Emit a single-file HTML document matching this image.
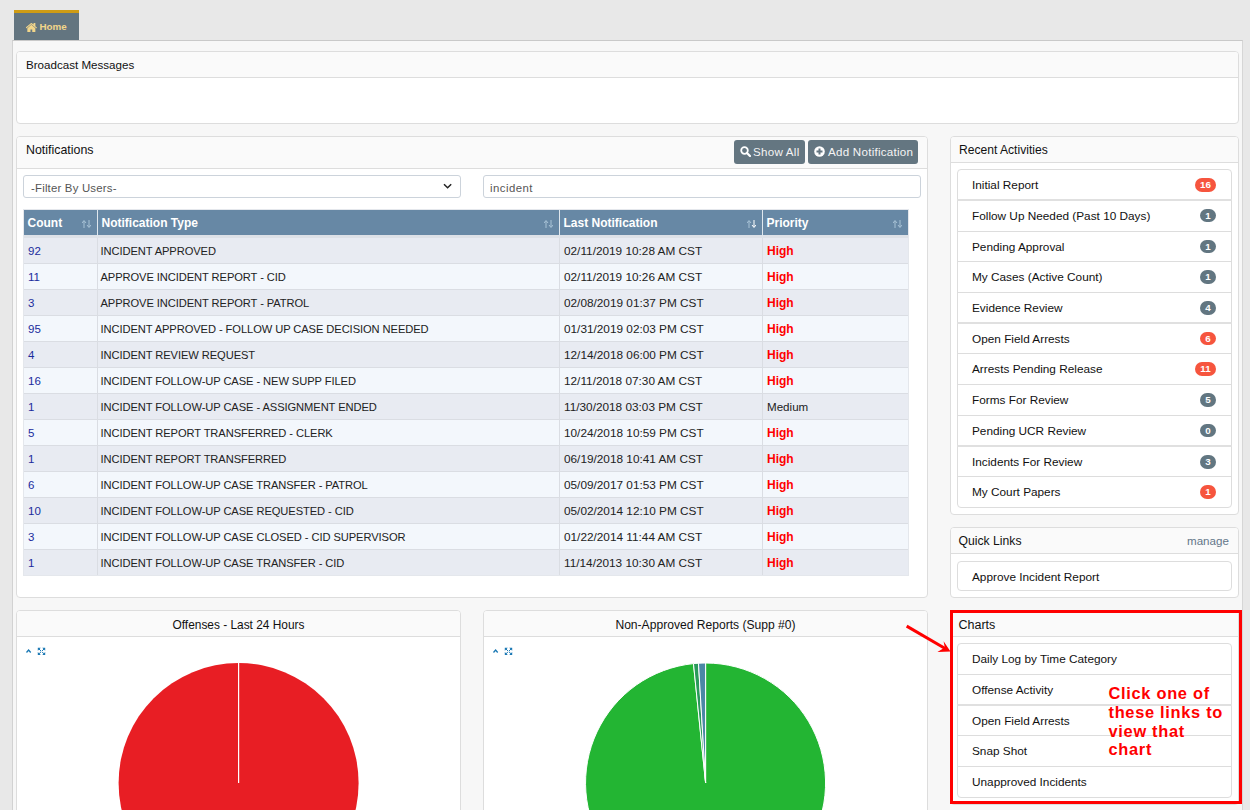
<!DOCTYPE html>
<html><head><meta charset="utf-8">
<style>
*{box-sizing:border-box;margin:0;padding:0}
html,body{width:1250px;height:810px;overflow:hidden;background:#e8e8e8;font-family:"Liberation Sans",sans-serif;color:#222;position:relative}
.abs{position:absolute}
.tab{left:14px;top:10px;width:65px;height:30px;background:#637580;border-top:3px solid #cf9c14}
.tab span{position:absolute;left:25.5px;top:8px;font-weight:bold;font-size:9.8px;color:#f2d68a}
.container{left:12px;top:40px;width:1231px;height:780px;background:#f7f7f7;border-top:1px solid #c9c9c9;border-left:1px solid #d2d2d2;border-right:1px solid #d6d6d6}
.panel{position:absolute;background:#fff;border:1px solid #dddddd;border-radius:4px;overflow:hidden}
.ph{position:absolute;left:0;right:0;top:0;background:#fafafa;border-bottom:1px solid #dddddd}
.pt{position:absolute;left:9px;font-size:11.6px;color:#111;white-space:nowrap}

.tbl{position:absolute;left:23px;top:209px;width:886px;border-collapse:separate;border-spacing:0;table-layout:fixed;border:1px solid #e4e7ec}
.tbl th{height:28px;background:#6788a5;color:#fff;font-weight:bold;font-size:12px;text-align:left;padding:0 0 0 3.5px;border-right:1px solid #dfe7ee;border-bottom:3px solid #dde1e7;position:relative;white-space:nowrap}
.tbl th:last-child,.tbl td:last-child{border-right:0}
.tbl td{height:26px;padding:0 0 0 4px;border-right:1px solid #dadde3;border-bottom:1px solid #dadde3;white-space:nowrap;font-size:11px;color:#222}
.tbl tr.odd td{background:#e8ebf2}
.tbl tr:last-child td{border-bottom:0;height:25px}
.tbl tr.even td{background:#f3f7fc}
.tbl td.c0{color:#1a2b9c;font-size:11.5px}
.tbl td.c2{font-size:11.8px}
.tbl td.c1{font-size:11.15px;padding-left:2.5px;letter-spacing:-0.08px}
.tbl td.hi{color:#f00;font-weight:bold;font-size:12px}
.tbl td.med{font-size:11.6px}
.sort{position:absolute;right:6px;top:10px;width:9px;height:8px}
.btn{position:absolute;top:140px;height:24px;background:#647681;border-radius:3px;color:#f4f4f4;font-size:11.6px}
.btn span{position:absolute;top:5px;white-space:nowrap;letter-spacing:0.25px}
.inp{position:absolute;top:175px;height:23px;background:#fff;border:1px solid #ccd3db;border-radius:3px;font-size:11.4px;color:#555}
.inp span{position:absolute;left:7px;top:5.5px;white-space:nowrap;letter-spacing:0.2px}

.lg{position:absolute;left:957px;width:275px;background:#fff;border:1px solid #dddddd;border-radius:4px}
.li{position:absolute;left:-1px;right:-1px;border-top:1px solid #dddddd;font-size:11.8px;color:#111}
.li:first-child{border-top-color:transparent}
.li span{position:absolute;left:15px;top:8px;white-space:nowrap}
.badge{position:absolute;right:16px;height:13.5px;border-radius:7px;color:#fff;font-weight:bold;font-size:9.8px;text-align:center;line-height:13.5px}
.br{background:#f6553e}
.bg{background:#627681}
</style></head><body>
<div class="abs tab"><svg style="position:absolute;left:12px;top:9.8px" width="11.6" height="9.2" viewBox="64 256 1664 1290" preserveAspectRatio="none"><path fill="#f2d68a" d="M1408 992v480q0 26-19 45t-45 19h-384v-384h-256v384h-384q-26 0-45-19t-19-45v-480q0-1 .5-3t.5-3l575-474 575 474q1 2 1 6zm223-69l-62 74q-8 9-21 11h-3q-13 0-21-7l-692-577-692 577q-12 8-24 7-13-2-21-11l-62-74q-8-10-7-23.5t11-21.5l719-599q32-26 76-26t76 26l244 204v-195q0-14 9-23t23-9h192q14 0 23 9t9 23v408l219 182q10 8 11 21.5t-7 23.5z"/></svg><span>Home</span></div>
<div class="abs container"></div>

<!-- Broadcast -->
<div class="panel" style="left:16px;top:51px;width:1223px;height:73px">
  <div class="ph" style="height:26px"><div class="pt" style="top:5.5px;left:9px">Broadcast Messages</div></div>
</div>

<!-- Notifications -->
<div class="panel" style="left:16px;top:136px;width:912px;height:462px">
  <div class="ph" style="height:32px"><div class="pt" style="top:6px;left:9px;font-size:12.4px">Notifications</div></div>
</div>


<table class="tbl">
<colgroup><col style="width:74px"><col style="width:462px"><col style="width:203px"><col style="width:145px"></colgroup>
<thead><tr><th>Count<svg class="sort" viewBox="0 0 9 8"><path d="M2 8V1M0 3L2 0.5L4 3" stroke="#a9c3d6" stroke-width="1" fill="none"/><path d="M7 0V7M5 5L7 7.5L9 5" stroke="#a9c3d6" stroke-width="1" fill="none"/></svg></th><th>Notification Type<svg class="sort" viewBox="0 0 9 8"><path d="M2 8V1M0 3L2 0.5L4 3" stroke="#a9c3d6" stroke-width="1" fill="none"/><path d="M7 0V7M5 5L7 7.5L9 5" stroke="#a9c3d6" stroke-width="1" fill="none"/></svg></th><th>Last Notification<svg class="sort" viewBox="0 0 9 8"><path d="M2 8V1M0 3L2 0.5L4 3" stroke="#a9c3d6" stroke-width="1" fill="none"/><path d="M7 0V7M5 5L7 7.5L9 5" stroke="#ffffff" stroke-width="1" fill="none"/></svg></th><th>Priority<svg class="sort" viewBox="0 0 9 8"><path d="M2 8V1M0 3L2 0.5L4 3" stroke="#a9c3d6" stroke-width="1" fill="none"/><path d="M7 0V7M5 5L7 7.5L9 5" stroke="#a9c3d6" stroke-width="1" fill="none"/></svg></th></tr></thead>
<tbody>
<tr class="odd"><td class="c0">92</td><td class="c1">INCIDENT APPROVED</td><td class="c2">02/11/2019 10:28 AM CST</td><td class="c3 hi">High</td></tr>
<tr class="even"><td class="c0">11</td><td class="c1">APPROVE INCIDENT REPORT - CID</td><td class="c2">02/11/2019 10:26 AM CST</td><td class="c3 hi">High</td></tr>
<tr class="odd"><td class="c0">3</td><td class="c1">APPROVE INCIDENT REPORT - PATROL</td><td class="c2">02/08/2019 01:37 PM CST</td><td class="c3 hi">High</td></tr>
<tr class="even"><td class="c0">95</td><td class="c1">INCIDENT APPROVED - FOLLOW UP CASE DECISION NEEDED</td><td class="c2">01/31/2019 02:03 PM CST</td><td class="c3 hi">High</td></tr>
<tr class="odd"><td class="c0">4</td><td class="c1">INCIDENT REVIEW REQUEST</td><td class="c2">12/14/2018 06:00 PM CST</td><td class="c3 hi">High</td></tr>
<tr class="even"><td class="c0">16</td><td class="c1">INCIDENT FOLLOW-UP CASE - NEW SUPP FILED</td><td class="c2">12/11/2018 07:30 AM CST</td><td class="c3 hi">High</td></tr>
<tr class="odd"><td class="c0">1</td><td class="c1">INCIDENT FOLLOW-UP CASE - ASSIGNMENT ENDED</td><td class="c2">11/30/2018 03:03 PM CST</td><td class="c3 med">Medium</td></tr>
<tr class="even"><td class="c0">5</td><td class="c1">INCIDENT REPORT TRANSFERRED - CLERK</td><td class="c2">10/24/2018 10:59 PM CST</td><td class="c3 hi">High</td></tr>
<tr class="odd"><td class="c0">1</td><td class="c1">INCIDENT REPORT TRANSFERRED</td><td class="c2">06/19/2018 10:41 AM CST</td><td class="c3 hi">High</td></tr>
<tr class="even"><td class="c0">6</td><td class="c1">INCIDENT FOLLOW-UP CASE TRANSFER - PATROL</td><td class="c2">05/09/2017 01:53 PM CST</td><td class="c3 hi">High</td></tr>
<tr class="odd"><td class="c0">10</td><td class="c1">INCIDENT FOLLOW-UP CASE REQUESTED - CID</td><td class="c2">05/02/2014 12:10 PM CST</td><td class="c3 hi">High</td></tr>
<tr class="even"><td class="c0">3</td><td class="c1">INCIDENT FOLLOW-UP CASE CLOSED - CID SUPERVISOR</td><td class="c2">01/22/2014 11:44 AM CST</td><td class="c3 hi">High</td></tr>
<tr class="odd"><td class="c0">1</td><td class="c1">INCIDENT FOLLOW-UP CASE TRANSFER - CID</td><td class="c2">11/14/2013 10:30 AM CST</td><td class="c3 hi">High</td></tr>
</tbody></table>
<div class="btn" style="left:734px;width:71px"><svg style="position:absolute;left:6px;top:6px" width="11" height="11" viewBox="0 0 11 11"><circle cx="4.5" cy="4.5" r="3.3" stroke="#fff" stroke-width="1.8" fill="none"/><path d="M7 7L10 10" stroke="#fff" stroke-width="2.2" stroke-linecap="round"/></svg><span style="left:19px">Show All</span></div>
<div class="btn" style="left:808px;width:110px"><svg style="position:absolute;left:6px;top:6px" width="11" height="11" viewBox="0 0 11 11"><circle cx="5.5" cy="5.5" r="5.3" fill="#fff"/><path d="M5.5 2.5V8.5M2.5 5.5H8.5" stroke="#647681" stroke-width="2"/></svg><span style="left:20px">Add Notification</span></div>
<div class="inp" style="left:23px;width:438px"><span>-Filter By Users-</span><svg style="position:absolute;left:419px;top:7px" width="10" height="7" viewBox="0 0 10 7"><path d="M1 1.2L4.6 4.8L8.2 1.2" stroke="#222" stroke-width="1.5" fill="none"/></svg></div>
<div class="inp" style="left:483px;width:438px"><span style="left:6px;letter-spacing:0.45px">incident</span></div>

<!-- Recent Activities -->
<div class="panel" style="left:950px;top:136px;width:289px;height:379px">
  <div class="ph" style="height:26px"><div class="pt" style="top:5.5px;left:8px;font-size:12.1px">Recent Activities</div></div>
</div>

<!-- Quick Links -->
<div class="panel" style="left:950px;top:527px;width:289px;height:71px">
  <div class="ph" style="height:26px"><div class="pt" style="top:5.5px;left:7.5px;font-size:12.2px">Quick Links</div></div>
</div>

<!-- Charts -->
<div class="panel" style="left:950px;top:610px;width:289px;height:195px">
  <div class="ph" style="height:26px"><div class="pt" style="top:7px;left:7.5px;font-size:12.5px">Charts</div></div>
</div>

<!-- Offenses chart -->
<div class="panel" style="left:16px;top:610px;width:445px;height:220px">
  <div class="ph" style="height:26px"><div class="pt" style="top:7px;left:0;right:0;text-align:center;font-size:11.9px">Offenses - Last 24 Hours</div></div>
</div>

<!-- Non-approved chart -->
<div class="panel" style="left:483px;top:610px;width:445px;height:220px">
  <div class="ph" style="height:26px"><div class="pt" style="top:7px;left:0;right:0;text-align:center;font-size:12.1px">Non-Approved Reports (Supp #0)</div></div>
</div>


<div class="lg" style="top:169.3px;height:338.48px"><div class="li" style="top:-1.00px;height:31.68px"><span>Initial Report</span><div class="badge br" style="top:8px;width:21px">16</div></div><div class="li" style="top:28.68px;height:32.68px;border-top:2px solid #e0e0e0"><span>Follow Up Needed (Past 10 Days)</span><div class="badge bg" style="top:8px;width:16px">1</div></div><div class="li" style="top:60.36px;height:31.68px"><span>Pending Approval</span><div class="badge bg" style="top:8px;width:16px">1</div></div><div class="li" style="top:91.04px;height:31.68px"><span>My Cases (Active Count)</span><div class="badge bg" style="top:8px;width:16px">1</div></div><div class="li" style="top:121.72px;height:31.68px"><span>Evidence Review</span><div class="badge bg" style="top:8px;width:16px">4</div></div><div class="li" style="top:151.40px;height:32.68px;border-top:2px solid #e0e0e0"><span>Open Field Arrests</span><div class="badge br" style="top:8px;width:16px">6</div></div><div class="li" style="top:183.08px;height:31.68px"><span>Arrests Pending Release</span><div class="badge br" style="top:8px;width:21px">11</div></div><div class="li" style="top:213.76px;height:31.68px"><span>Forms For Review</span><div class="badge bg" style="top:8px;width:16px">5</div></div><div class="li" style="top:244.44px;height:31.68px"><span>Pending UCR Review</span><div class="badge bg" style="top:8px;width:16px">0</div></div><div class="li" style="top:274.72px;height:32.08px;border-top:2px solid #e0e0e0"><span>Incidents For Review</span><div class="badge bg" style="top:8px;width:16px">3</div></div><div class="li" style="top:305.80px;height:31.68px"><span>My Court Papers</span><div class="badge br" style="top:8px;width:16px">1</div></div></div>
<div style="position:absolute;left:1187px;top:534px;font-size:11.6px;color:#637689">manage</div>
<div class="lg" style="top:560.8px;height:30px"><div class="li" style="top:-1px;height:30px"><span>Approve Incident Report</span></div></div>
<div class="lg" style="top:643.2px;height:154.50px"><div class="li" style="top:-1.00px;height:31.70px"><span>Daily Log by Time Category</span></div><div class="li" style="top:29.70px;height:31.70px"><span>Offense Activity</span></div><div class="li" style="top:59.40px;height:32.70px;border-top:2px solid #e0e0e0"><span>Open Field Arrests</span></div><div class="li" style="top:91.10px;height:31.70px"><span>Snap Shot</span></div><div class="li" style="top:121.80px;height:31.70px"><span>Unapproved Incidents</span></div></div>
<div style="position:absolute;left:950px;top:610px;width:292px;height:194px;border:3px solid #ff0000"></div>
<div style="position:absolute;left:1108.5px;top:684.3px;font-weight:bold;font-size:16.4px;letter-spacing:0.7px;line-height:18.67px;color:#ff0000;white-space:nowrap">Click one of<br>these links to<br>view that<br>chart</div>
<svg style="position:absolute;left:900px;top:620px" width="56" height="40" viewBox="900 620 56 40"><path d="M906.7 626.1L946 649" stroke="#ff0000" stroke-width="3"/><path d="M950.5 651.6L943.6 641.2L944.8 647.6L937.4 652Z" fill="#ff0000"/></svg>

<svg style="position:absolute;left:0;top:0" width="1250" height="810"><circle cx="238.6" cy="783" r="120" fill="#e81e24"/><path d="M238.6 783V662" stroke="#fff" stroke-width="1.2"/><path d="M705.60 783.00L705.60 663.00A120 120 0 1 1 693.47 663.61Z" fill="#23b533" stroke="#fff" stroke-width="1" stroke-linejoin="round"/><path d="M705.60 783.00L693.47 663.61A120 120 0 0 1 698.48 663.21Z" fill="#2a9a5a" stroke="#fff" stroke-width="1" stroke-linejoin="round"/><path d="M705.60 783.00L698.48 663.21A120 120 0 0 1 705.60 663.00Z" fill="#4a88a5" stroke="#fff" stroke-width="1" stroke-linejoin="round"/><path d="M26.5 652.5L28.6 650L30.7 652.5" stroke="#1a78b4" stroke-width="1.3" fill="none"/><g transform="translate(37.8 647.8)" fill="#1a78b4"><path d="M0 0H3L0 3Z M7.4 0V3L4.4 0Z M0 7.2V4.2L3 7.2Z M7.4 7.2H4.4L7.4 4.2Z"/><path d="M1 1L3.2 3.2M6.4 1L4.2 3.2M1 6.2L3.2 4M6.4 6.2L4.2 4" stroke="#1a78b4" stroke-width="1"/></g><path d="M493.5 652.5L495.6 650L497.7 652.5" stroke="#1a78b4" stroke-width="1.3" fill="none"/><g transform="translate(504.8 647.8)" fill="#1a78b4"><path d="M0 0H3L0 3Z M7.4 0V3L4.4 0Z M0 7.2V4.2L3 7.2Z M7.4 7.2H4.4L7.4 4.2Z"/><path d="M1 1L3.2 3.2M6.4 1L4.2 3.2M1 6.2L3.2 4M6.4 6.2L4.2 4" stroke="#1a78b4" stroke-width="1"/></g></svg>
</body></html>
